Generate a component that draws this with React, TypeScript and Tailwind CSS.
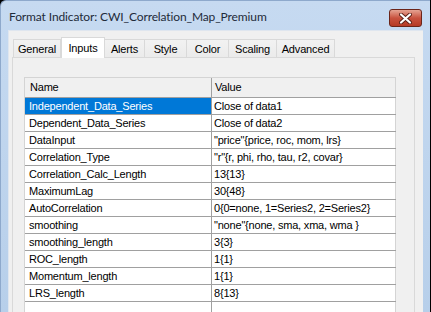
import React from "react";

const rows: [string, string][] = [
  ["Independent_Data_Series", "Close of data1"],
  ["Dependent_Data_Series", "Close of data2"],
  ["DataInput", "\"price\"{price, roc, mom, lrs}"],
  ["Correlation_Type", "\"r\"{r, phi, rho, tau, r2, covar}"],
  ["Correlation_Calc_Length", "13{13}"],
  ["MaximumLag", "30{48}"],
  ["AutoCorrelation", "0{0=none, 1=Series2, 2=Series2}"],
  ["smoothing", "\"none\"{none, sma, xma, wma }"],
  ["smoothing_length", "3{3}"],
  ["ROC_length", "1{1}"],
  ["Momentum_length", "1{1}"],
  ["LRS_length", "8{13}"],
  ["", ""],
];

const tabs = ["General", "Inputs", "Alerts", "Style", "Color", "Scaling", "Advanced"];
const tabW = [48, 44, 40, 42, 42, 48, 58];

export default function App() {
  const ui = { fontFamily: 'Lato, "Open Sans", sans-serif' };
  const ms = { fontFamily: '"Liberation Sans", Arial, sans-serif' };
  return (
    <div className="w-[431px] h-[312px] bg-black overflow-hidden">
      <div className="w-[430px] h-[312px] flex flex-col bg-gradient-to-b from-[#c6daf1] to-[#b7cfea] rounded-tl-[6px] border-l border-t border-[#8ea9cc]">
        <div className="h-[29px] flex items-center relative shrink-0">
          <span className="pl-[8px] pt-[3px] text-[12px] tracking-[-0.12px] text-[#1e2b3a]" style={ui}>
            Format Indicator: CWI_Correlation_Map_Premium
          </span>
          <div className="absolute left-[388px] top-[8px] w-[33px] h-[18px] rounded-[3px] border border-[#6b2519] bg-gradient-to-b from-[#e5a393] via-[#c8523f] to-[#b53a25] flex items-center justify-center">
            <svg width="13" height="11" viewBox="0 0 13 11">
              <path d="M2 1.5 L11 9.5 M11 1.5 L2 9.5" stroke="#5a2017" strokeWidth="4" strokeLinecap="round" />
              <path d="M2 1.5 L11 9.5 M11 1.5 L2 9.5" stroke="#ffffff" strokeWidth="2.2" strokeLinecap="round" />
            </svg>
          </div>
        </div>
        <div className="ml-[7px] w-[415px] flex-1 bg-[#f0f0f0] border-t border-l border-[#dfe6ef] flex flex-col">
          <div className="h-[26px] flex items-end pl-[4px] shrink-0">
            {tabs.map((t, i) =>
              i === 1 ? (
                <div
                  key={t}
                  className="h-[21px] bg-white border border-b-0 border-[#d9d9d9] flex items-start justify-center pt-[2px] text-[11px] tracking-[-0.15px] text-black relative z-10 -mb-px"
                  style={{ ...ms, width: tabW[i] }}
                >
                  {t}
                </div>
              ) : (
                <div
                  key={t}
                  className="h-[18px] bg-gradient-to-b from-[#f2f2f2] to-[#ebebeb] border border-b-0 border-l-0 border-[#d9d9d9] first:border-l flex items-center justify-center pt-[1px] text-[11px] tracking-[-0.15px] text-black"
                  style={{ ...ms, width: tabW[i] }}
                >
                  {t}
                </div>
              )
            )}
          </div>
          <div className="ml-[3px] w-[403px] flex-1 border border-b-0 border-[#d9d9d9] bg-[#f0f0f0] pl-[11px] pt-[19px]">
            <div className="w-[372px] border-l border-t border-[#d4d4d4] bg-white">
              <div className="flex h-[20px] bg-[#f0f0f0] border-b border-[#a0a0a0] text-[11px] tracking-[-0.2px] text-black" style={ms}>
                <div className="w-[187px] border-r border-[#a0a0a0] pl-[5px] flex items-center">Name</div>
                <div className="flex-1 pl-[3px] flex items-center border-r border-[#d4d4d4]">Value</div>
              </div>
              {rows.map(([n, v], i) => (
                <div key={i} className="flex h-[17px] border-b border-[#a0a0a0] text-[11px] tracking-[-0.2px]" style={ms}>
                  <div
                    className={`w-[187px] border-r border-[#a0a0a0] pl-[4px] flex items-center ${
                      i === 0 ? "bg-[#0078d7] text-white" : "text-black"
                    }`}
                  >
                    {n}
                  </div>
                  <div className="flex-1 pl-[2px] flex items-center text-black border-r border-[#d4d4d4]">
                    {v}
                  </div>
                </div>
              ))}
            </div>
          </div>
        </div>
      </div>
    </div>
  );
}
